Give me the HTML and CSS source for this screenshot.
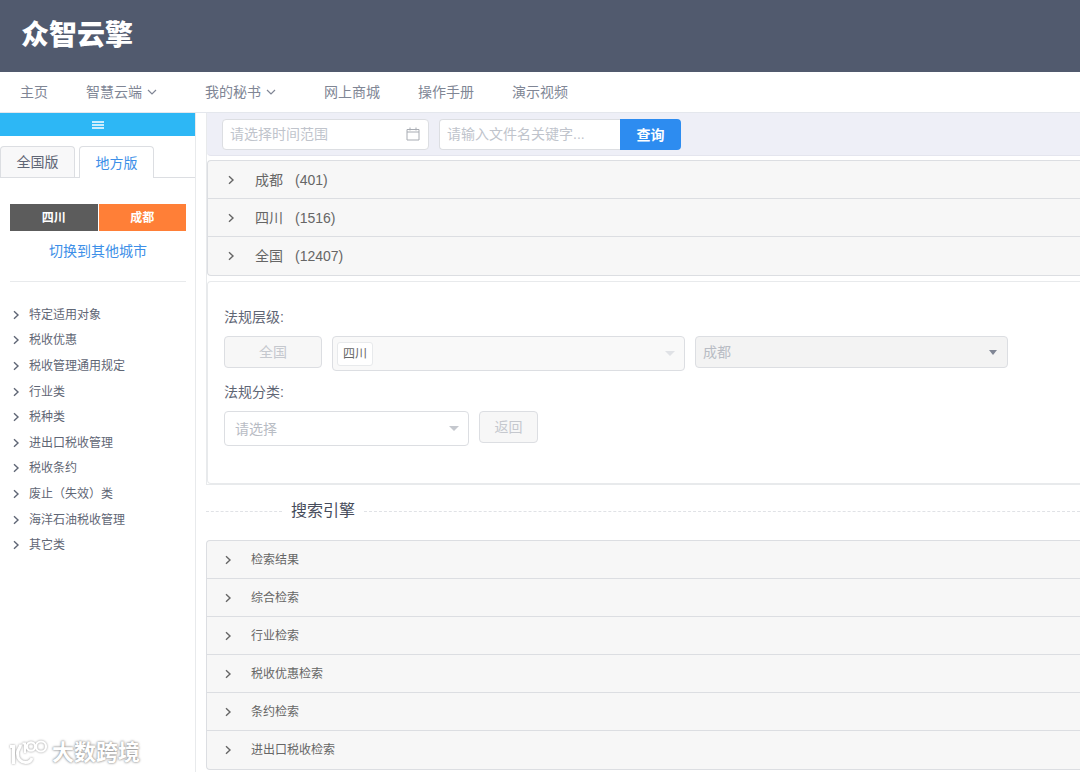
FILE: index.html
```html
<!DOCTYPE html>
<html lang="zh-CN">
<head>
  <meta charset="UTF-8">
  <title>众智云擎</title>
  <link rel="stylesheet" href="styles.css">
</head>
<body>
  <svg class="defs" width="0" height="0" aria-hidden="true">
    <symbol id="arrow" viewBox="0 0 10 10"><path d="M3 1.2 7 5 3 8.8" fill="none" stroke="currentColor" stroke-width="1.4"/></symbol>
    <symbol id="down" viewBox="0 0 10 10"><path d="M1 3 5 7 9 3" fill="none" stroke="currentColor" stroke-width="1.2"/></symbol>
  </svg>

  <header class="header">
    <h1 class="logo">众智云擎</h1>
  </header>

  <nav class="nav">
    <a href="#">主页</a>
    <a href="#" class="has-sub">智慧云端<svg><use href="#down"/></svg></a>
    <a href="#" class="has-sub">我的秘书<svg><use href="#down"/></svg></a>
    <a href="#">网上商城</a>
    <a href="#">操作手册</a>
    <a href="#">演示视频</a>
  </nav>

  <div class="layout">
    <aside class="sidebar">
      <button class="fold" type="button" aria-label="菜单">
        <svg width="12" height="8" viewBox="0 0 12 8"><path d="M0 1h12M0 4h12M0 7h12" stroke="#fff" stroke-width="1.3"/></svg>
      </button>
      <div class="tabs">
        <button type="button" class="tab">全国版</button>
        <button type="button" class="tab active">地方版</button>
      </div>
      <div class="area">
        <div class="city">
          <button type="button" class="province">四川</button>
          <button type="button" class="current">成都</button>
        </div>
        <a href="#" class="switch">切换到其他城市</a>
      </div>
      <ul class="tree">
        <li><svg><use href="#arrow"/></svg><a href="#">特定适用对象</a></li>
        <li><svg><use href="#arrow"/></svg><a href="#">税收优惠</a></li>
        <li><svg><use href="#arrow"/></svg><a href="#">税收管理通用规定</a></li>
        <li><svg><use href="#arrow"/></svg><a href="#">行业类</a></li>
        <li><svg><use href="#arrow"/></svg><a href="#">税种类</a></li>
        <li><svg><use href="#arrow"/></svg><a href="#">进出口税收管理</a></li>
        <li><svg><use href="#arrow"/></svg><a href="#">税收条约</a></li>
        <li><svg><use href="#arrow"/></svg><a href="#">废止（失效）类</a></li>
        <li><svg><use href="#arrow"/></svg><a href="#">海洋石油税收管理</a></li>
        <li><svg><use href="#arrow"/></svg><a href="#">其它类</a></li>
      </ul>
    </aside>

    <main class="main">
      <div class="top">
        <form class="search">
          <div class="date">
            <input type="text" placeholder="请选择时间范围" aria-label="时间范围">
            <svg width="14" height="14" viewBox="0 0 14 14"><path d="M1 2.500h12v10.500H1zM1 5h12M4 .5v3M10 .5v3" fill="none" stroke="#a8acb3" stroke-width="1"/></svg>
          </div>
          <div class="keyword">
            <input type="text" placeholder="请输入文件名关键字..." aria-label="文件名关键字">
            <button type="button">查询</button>
          </div>
        </form>

        <div class="collapse result">
          <button type="button"><svg><use href="#arrow"/></svg><span>成都<span class="count">(401)</span></span></button>
          <button type="button"><svg><use href="#arrow"/></svg><span>四川<span class="count">(1516)</span></span></button>
          <button type="button"><svg><use href="#arrow"/></svg><span>全国<span class="count">(12407)</span></span></button>
        </div>

        <form class="card">
          <label for="province">法规层级:</label>
          <div class="row level">
            <button type="button" class="btn" disabled>全国</button>
            <div class="select tags">
              <select id="province" disabled><option></option></select>
              <span class="tag">四川</span>
            </div>
            <div class="select plain">
              <select aria-label="城市" disabled><option>成都</option></select>
            </div>
          </div>
          <label for="category">法规分类:</label>
          <div class="row">
            <div class="select category">
              <select id="category"><option>请选择</option></select>
            </div>
            <button type="button" class="btn back" disabled>返回</button>
          </div>
        </form>
      </div>

      <h2 class="divider">搜索引擎</h2>

      <div class="collapse engine">
        <button type="button"><svg><use href="#arrow"/></svg>检索结果</button>
        <button type="button"><svg><use href="#arrow"/></svg>综合检索</button>
        <button type="button"><svg><use href="#arrow"/></svg>行业检索</button>
        <button type="button"><svg><use href="#arrow"/></svg>税收优惠检索</button>
        <button type="button"><svg><use href="#arrow"/></svg>条约检索</button>
        <button type="button"><svg><use href="#arrow"/></svg>进出口税收检索</button>
      </div>
    </main>
  </div>

  <div class="mark">
    <svg width="40" height="28" viewBox="0 0 40 28" fill="none" stroke="#fff" stroke-width="3">
      <path d="M2 7.500h3.500V25M12.500 5.500C12.500 9 9.500 10 9.500 14.500c0 5.500 3.500 9 8 9 3 0 5.500-1.500 6.500-4.500"/>
      <path d="M14.500 4.500H17V14" stroke-width="2"/>
      <circle cx="23" cy="7.500" r="4.200" stroke-width="2.200"/>
      <circle cx="33" cy="7.500" r="5" stroke-width="2.200"/>
    </svg>
    <span>大数跨境</span>
  </div>
</body>
</html>
```
FILE: styles.css
```css
* {
  box-sizing: border-box;
}
body {
  margin: 0;
  min-height: 100vh;
  display: flex;
  flex-direction: column;
  position: relative;
  font-family: "Liberation Sans", "Noto Sans CJK SC", sans-serif;
  font-size: 14px;
  line-height: 20px;
  color: #5f6675;
  background: #fff;
}
button, input, select {
  font: inherit;
  color: inherit;
  margin: 0;
}
button {
  padding: 0;
  border: none;
  background: none;
  cursor: pointer;
}
a {
  color: inherit;
  text-decoration: none;
}
.defs {
  position: absolute;
}

.header {
  height: 72px;
  padding: 0 21px;
  display: flex;
  align-items: center;
  background: #515a6e;
}
.logo {
  margin: 0;
  font-size: 28px;
  line-height: 32px;
  font-weight: 900;
  color: #fff;
}

.nav {
  display: flex;
  gap: 38px;
  height: 41px;
  padding: 0 20px;
  line-height: 40px;
  color: #808695;
  border-bottom: 1px solid #e4e7ed;
}
.has-sub {
  padding-right: 10px;
}
.nav svg {
  width: 10px;
  height: 10px;
  margin-left: 5px;
}

.layout {
  flex: 1;
  display: flex;
}
.sidebar {
  width: 196px;
  flex-shrink: 0;
  border-right: 1px solid #e8eaec;
}
.fold {
  display: flex;
  align-items: center;
  justify-content: center;
  width: 100%;
  height: 23px;
  background: #2db7f5;
}
.tabs {
  display: flex;
  gap: 4px;
  margin-top: 10px;
  border-bottom: 1px solid #dcdee2;
}
.tab {
  width: 75px;
  height: 31px;
  border: 1px solid #dcdee2;
  border-bottom: none;
  border-radius: 4px 4px 0 0;
  background: #f8f8f9;
}
.tab.active {
  height: 32px;
  margin-bottom: -1px;
  color: #3d8fe8;
  background: #fff;
}
.area {
  margin: 26px 9px 0 10px;
  padding-bottom: 20px;
  border-bottom: 1px solid #e8eaec;
  text-align: center;
}
.city {
  display: flex;
  gap: 1px;
  margin-bottom: 10px;
}
.city button {
  flex: 1;
  height: 27px;
  font-size: 12px;
  font-weight: bold;
  color: #fff;
}
.province {
  background: #5c5c5c;
}
.current {
  background: #ff7f37;
}
.switch {
  color: #3d8fe8;
}
.tree {
  display: flex;
  flex-direction: column;
  min-height: 256px;
  margin: 20px 0 0;
  padding: 0 11px;
  list-style: none;
  font-size: 12px;
}
.tree li {
  flex: 1;
  display: flex;
  align-items: center;
  gap: 8px;
}
.tree svg {
  width: 10px;
  height: 10px;
}

.main {
  flex: 1;
  min-width: 0;
  padding-left: 10px;
}
.top {
  border-left: 1px solid #e8eaec;
  border-bottom: 1px solid #e8eaec;
}
.search {
  display: flex;
  gap: 10px;
  height: 43px;
  padding: 6px 15px;
  border-bottom: 1px solid #e4e5ee;
  border-radius: 0 0 0 4px;
  background: #eeeff7;
}
.search input {
  height: 31px;
  padding: 0 7px 1px;
  border: 1px solid #dcdee2;
  border-radius: 4px;
  background: #fff;
}
.search input::placeholder {
  color: #c0c4cc;
}
.date {
  position: relative;
  width: 207px;
}
.date input {
  width: 100%;
}
.date svg {
  position: absolute;
  right: 9px;
  top: 8px;
}
.keyword {
  display: flex;
}
.keyword input {
  width: 181px;
  border-right: none;
  border-radius: 4px 0 0 4px;
}
.keyword button {
  width: 61px;
  height: 31px;
  border-radius: 0 4px 4px 0;
  font-weight: bold;
  color: #fff;
  background: #2d8cf0;
}

.collapse {
  border: 1px solid #dcdee2;
  border-right: none;
  border-radius: 4px 0 0 4px;
  background: #f7f7f7;
  overflow: hidden;
}
.collapse button {
  display: flex;
  align-items: center;
  gap: 19px;
  width: 100%;
  height: 38px;
  padding-left: 18px;
  color: #666;
  border-bottom: 1px solid #dcdee2;
}
.collapse button:last-child {
  border-bottom: none;
}
.collapse svg {
  width: 10px;
  height: 10px;
}
.result {
  margin-top: 4px;
}
.count {
  margin-left: 12px;
}
.engine {
  font-size: 12px;
}
.engine button {
  padding-left: 16px;
  gap: 18px;
}

.card {
  margin-top: 5px;
  padding: 25px 72px 37px 16px;
  border: 1px solid #e8eaec;
  border-right: none;
  border-radius: 4px 0 0 4px;
}
.card label {
  display: block;
}
.row {
  display: flex;
  align-items: flex-start;
  gap: 10px;
  margin: 9px 0 11px;
}
.row:last-child {
  margin-bottom: 0;
}
.level {
  display: grid;
  grid-template-columns: 98px 353fr 313fr;
}
.btn {
  height: 32px;
  border: 1px solid #dcdee2;
  border-radius: 4px;
  color: #c5c8ce;
  background: #f7f7f7;
}
.back {
  width: 59px;
}
.select {
  position: relative;
}
.select::after {
  content: "";
  position: absolute;
  right: 10px;
  top: 15px;
  border: 5px solid transparent;
  border-top-color: #c5c8ce;
  border-bottom: none;
}
.select select {
  display: block;
  width: 100%;
  height: 35px;
  padding: 0 10px;
  border: 1px solid #dcdee2;
  border-radius: 4px;
  appearance: none;
  color: #b8bcc4;
  background: #fff;
  opacity: 1;
}
.select.tags select {
  background: #f9f9f9;
}
.tags::after {
  border-top-color: #e0e2e6;
}
.tag {
  position: absolute;
  left: 5px;
  top: 6px;
  padding: 0 5px;
  border: 1px solid #e8eaec;
  border-radius: 3px;
  font-size: 12px;
  line-height: 22px;
  color: #666;
  background: #fff;
}
.select.plain select {
  height: 32px;
  padding: 0 7px;
  background: #f3f3f3;
}
.plain::after {
  top: 14px;
  border-width: 5px 4px 0;
  right: 11px;
  border-top-color: #808695;
}
.category {
  width: 245px;
}

.divider {
  display: flex;
  align-items: center;
  gap: 9px;
  margin: 14px 0 17px;
  font-size: 16px;
  line-height: 24px;
  font-weight: normal;
  color: #464c5b;
}
.divider::before, .divider::after {
  content: "";
  width: 76px;
  border-top: 1px dashed #e0e2e6;
}
.divider::after {
  flex: 1;
}

.mark {
  position: absolute;
  left: 8px;
  bottom: 4px;
  display: flex;
  align-items: center;
  gap: 4px;
  font-size: 22px;
  line-height: 30px;
  font-weight: bold;
  color: #fff;
  text-shadow: 0 0 2px #888, 0 0 3px #aaa;
}
.mark svg {
  filter: drop-shadow(0 0 1px #999);
}
```
